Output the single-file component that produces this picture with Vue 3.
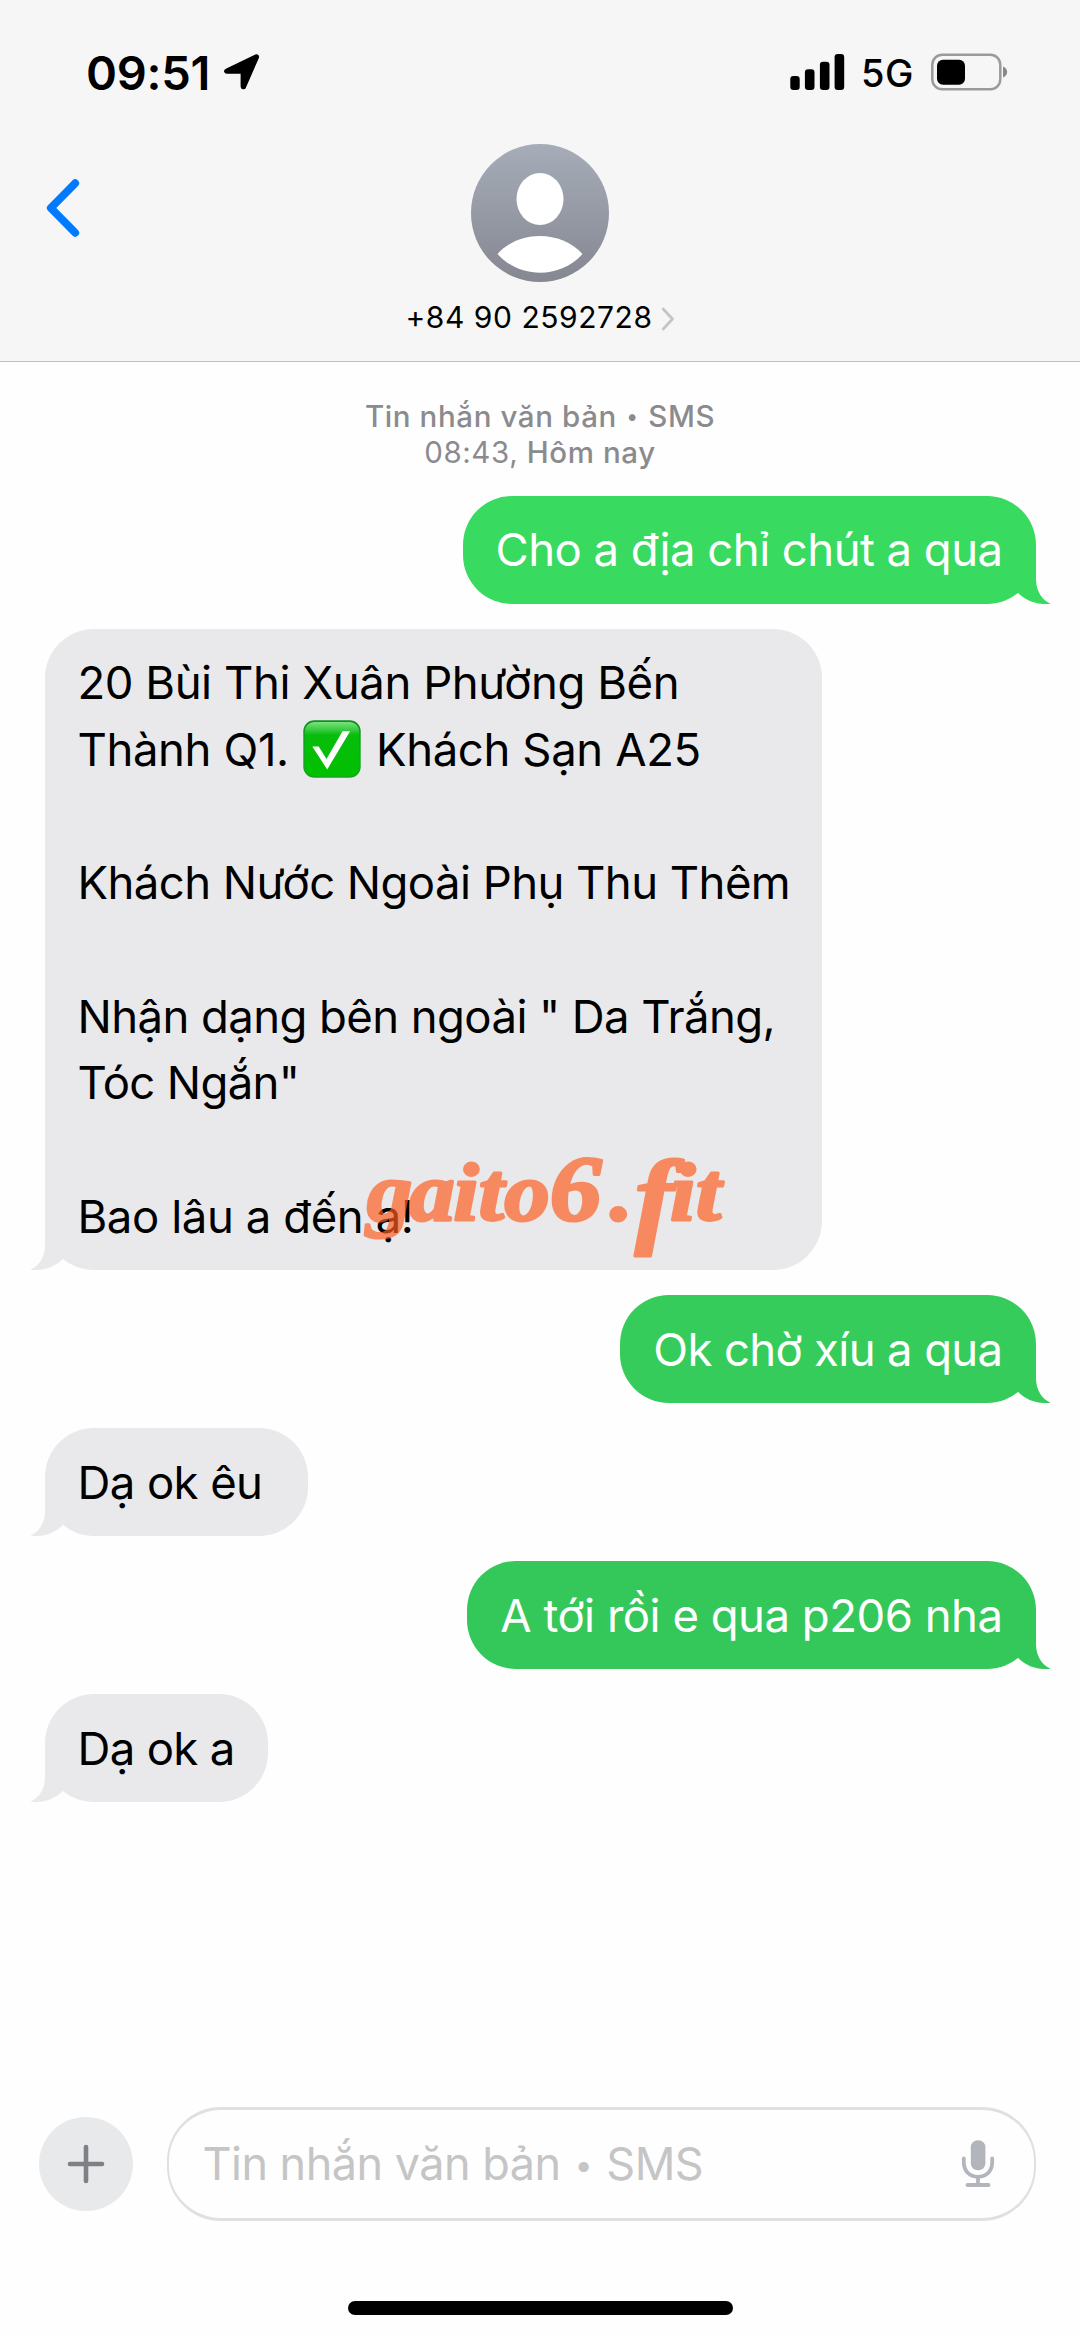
<script setup>
const contact = '+84 90 2592728'

// `track` is the letter spacing of a line in px
const messages = [
  { id: 1, side: 'out', tone: 'fresh', lines: [{ text: 'Cho a địa chỉ chút a qua', track: -0.55 }] },
  {
    id: 2,
    side: 'in',
    tone: 'wide',
    lines: [
      { text: '20 Bùi Thi Xuân Phường Bến', track: -0.46 },
      { text: 'Thành Q1. ', check: true, after: ' Khách Sạn A25', track: -0.4 },
      { text: '', track: 0 },
      { text: 'Khách Nước Ngoài Phụ Thu Thêm', track: -0.57 },
      { text: '', track: 0 },
      { text: 'Nhận dạng bên ngoài " Da Trắng,', track: -0.59 },
      { text: 'Tóc Ngắn"', track: -0.65 },
      { text: '', track: 0 },
      { text: 'Bao lâu a đến ạ!', track: -0.42 }
    ]
  },
  { id: 3, side: 'out', tone: 'mid', lines: [{ text: 'Ok chờ xíu a qua', track: -0.65 }] },
  { id: 4, side: 'in', tone: '', lines: [{ text: 'Dạ ok êu\u00a0', track: -0.6 }] },
  { id: 5, side: 'out', tone: 'deep', lines: [{ text: 'A tới rồi e qua p206 nha', track: -0.5 }] },
  { id: 6, side: 'in', tone: '', lines: [{ text: 'Dạ ok a', track: -0.65 }] }
]
</script>

<template>
  <div class="phone">
    <header class="header">
      <div class="status">
        <div class="status-left">
          <span class="clock">09:51</span>
          <svg class="location" width="38" height="38" viewBox="0 0 38 38">
            <path d="M3.500 17.200 33 2.800c1-.4 1.900.4 1.500 1.500L21.600 34c-.6 1.300-2.500 1-2.500-.5V19.300H4c-1.700 0-2-1.500-.5-2.100Z" fill="#000" stroke="#000" stroke-width="3" stroke-linejoin="round" />
          </svg>
        </div>
        <div class="status-right">
          <svg width="55" height="37" viewBox="0 0 55 37">
            <rect x="0.300" y="22" width="9.400" height="14" rx="3.200" />
            <rect x="14.900" y="15.300" width="9.600" height="20.700" rx="3.200" />
            <rect x="29.900" y="7.800" width="9.600" height="28.200" rx="3.200" />
            <rect x="44.600" y="0" width="9.600" height="36" rx="3.200" />
          </svg>
          <span class="network">5G</span>
          <svg class="battery" width="77" height="38" viewBox="0 0 77 38">
            <rect x="1.300" y="1.800" width="68" height="34.400" rx="10" fill="none" stroke="#9b9b9c" stroke-width="2.500" />
            <rect x="6" y="6.700" width="28" height="25" rx="6" />
            <path d="M72 13.500c5.500 2 5.500 9 0 11Z" fill="#88888a" />
          </svg>
        </div>
      </div>

      <div class="identity">
        <svg class="back" width="36" height="60" viewBox="0 0 36 60">
          <path d="M30.200 5.200 5.800 30l24.400 24.800" fill="none" stroke="#007aff" stroke-width="7.800" stroke-linecap="round" stroke-linejoin="round" />
        </svg>
        <svg class="avatar" width="138" height="138" viewBox="0 0 138 138">
          <defs>
            <linearGradient id="avatar-fill" x1="0" y1="0" x2="0" y2="1">
              <stop offset="0" stop-color="#a6adb8" />
              <stop offset="1" stop-color="#858791" />
            </linearGradient>
          </defs>
          <circle cx="69" cy="69" r="69" fill="url(#avatar-fill)" />
          <ellipse cx="69" cy="55" rx="23.500" ry="26" fill="#fff" />
          <path d="M26.500 110C48 86 90 86 111.500 110C89 135 49 135 26.500 110Z" fill="#fff" />
        </svg>
      </div>

      <div class="contact">
        <span>{{ contact }}</span>
        <svg width="14" height="24" viewBox="0 0 14 24">
          <path d="M2.200 2 11.500 12 2.200 22" fill="none" stroke="#c5c5c8" stroke-width="2.800" stroke-linecap="round" stroke-linejoin="round" />
        </svg>
      </div>
    </header>

    <main class="thread">
      <div class="stamp">
        <div>Tin nhắn văn bản <span class="dot">•</span> SMS</div>
        <div><span class="stamp-time">08:43,</span> Hôm nay</div>
      </div>

      <div v-for="m in messages" :key="m.id" class="bubble" :class="[m.side, m.tone]">
        <div v-for="(line, i) in m.lines" :key="i" class="line" :style="{ letterSpacing: line.track + 'px' }">
          <span>{{ line.text }}</span>
          <svg v-if="line.check" class="check" width="58" height="58" viewBox="0 0 58 58">
            <defs>
              <linearGradient id="check-rim" x1="0" y1="0" x2="0" y2="1">
                <stop offset="0" stop-color="#0d8f1d" />
                <stop offset="0.500" stop-color="#10a820" />
                <stop offset="1" stop-color="#15a51d" />
              </linearGradient>
              <linearGradient id="check-face" x1="0" y1="0" x2="0" y2="1">
                <stop offset="0" stop-color="#7be07f" />
                <stop offset="0.160" stop-color="#2fc936" />
                <stop offset="0.240" stop-color="#08bd0c" />
                <stop offset="1" stop-color="#00c000" />
              </linearGradient>
            </defs>
            <rect x="0.300" y="0.300" width="57.400" height="57.400" rx="11" fill="url(#check-rim)" />
            <rect x="1.800" y="2" width="54.400" height="54.200" rx="9.500" fill="url(#check-face)" />
            <path d="M9.300 26.400h6.400L23.500 39 39.500 11.200h7.600L24.200 49.500Z" fill="#fff" />
          </svg>
          <span v-if="line.after">{{ line.after }}</span>
        </div>

        <svg class="tail" width="50" height="50" viewBox="0 0 50 50">
          <path d="M35 0V25C35 37 41 46 49.500 49.700C47 50 44.500 50 43 50C34 50 24 46 17.200 39L5 20Z" fill="currentColor" />
        </svg>

        <svg v-if="m.tone === 'wide'" class="watermark" width="400" height="180" viewBox="360 1120 400 180">
          <text transform="translate(366 1220) scale(1.100 1)" y="0" font-size="82">
            <tspan x="1">g</tspan><tspan x="39.500">a</tspan><tspan x="79.500">i</tspan><tspan x="102.500">t</tspan><tspan x="126">o</tspan><tspan x="167" font-size="94">6</tspan><tspan x="222">.</tspan><tspan x="244.500" y="13" font-size="106">f</tspan><tspan x="276.500" y="0">i</tspan><tspan x="300">t</tspan>
          </text>
        </svg>
      </div>
    </main>

    <footer class="composer">
      <div class="plus">
        <svg width="38" height="40" viewBox="0 0 38 40">
          <path d="M19 3v34M3 20h32" fill="none" stroke="#7e8085" stroke-width="4.600" stroke-linecap="round" />
        </svg>
      </div>
      <div class="field">
        <span class="placeholder">Tin nhắn văn bản <span class="dot">•</span> SMS</span>
        <svg width="34" height="48" viewBox="0 0 34 48" fill="#b3b5bd">
          <rect x="9.800" y="0.300" width="14.600" height="30" rx="7" />
          <path d="M2.800 18.500V22C2.800 31 8.500 36.800 17 36.800S31.200 31 31.200 22V18.500M17 37v8M6.500 45H27.500" fill="none" stroke="#b3b5bd" stroke-width="3.800" stroke-linecap="round" />
        </svg>
      </div>
    </footer>
    <div class="home"></div>
  </div>
</template>

<style>
body {
  background: #fefefe;
}
</style>

<style scoped>
.phone {
  display: flex;
  flex-direction: column;
  width: 1080px;
  height: 2337px;
  overflow: hidden;
  background: #fefefe;
  color: #000;
  font-family: Inter, "Noto Sans", sans-serif;
}
svg {
  display: block;
  flex: none;
}
.header {
  box-sizing: border-box;
  height: 362px;
  background: #f6f6f7;
  border-bottom: 1.500px solid #bebebf;
}
.status {
  display: flex;
  align-items: center;
  justify-content: space-between;
  height: 144px;
  padding: 0 72px 0 86px;
}
.status-left,
.status-right {
  display: flex;
  align-items: center;
}
.clock {
  font-size: 47px;
  font-weight: 600;
  line-height: 1;
  letter-spacing: -0.300px;
}
.location {
  margin-left: 13px;
}
.network {
  margin: 2px 17px 0 16px;
  font-size: 38px;
  font-weight: 500;
  line-height: 1;
  letter-spacing: 0.500px;
}
.identity {
  display: grid;
  grid-template-columns: 1fr auto 1fr;
}
.back {
  margin: 34px 0 0 45px;
}
.contact {
  display: flex;
  align-items: center;
  justify-content: center;
  gap: 8px;
  margin-top: 17px;
  font-size: 30px;
  line-height: 36px;
  letter-spacing: 0.550px;
}
.contact svg {
  margin-top: 3px;
}
.thread {
  flex: 1;
  display: flex;
  flex-direction: column;
  gap: 25.200px;
  padding: 35.500px 44.500px 0;
}
.stamp {
  font-size: 29.500px;
  font-weight: 500;
  line-height: 36.500px;
  letter-spacing: 0.600px;
  text-align: center;
  color: #8b8b8e;
}
.stamp-time {
  font-weight: 400;
}
.dot {
  display: inline-block;
  margin: 0 0.060em;
  font-size: 0.720em;
  line-height: 1;
  vertical-align: 0.110em;
}
.bubble {
  position: relative;
  box-sizing: border-box;
  padding: 21.700px 33px 19.500px;
  border-radius: 49px;
  font-size: 45.500px;
}
.line {
  display: flex;
  height: 66.650px;
  line-height: 66.650px;
  white-space: pre;
}
.in {
  align-self: flex-start;
  color: #000;
  background: #e9e9eb;
}
.out {
  align-self: flex-end;
  color: #fff;
  background: var(--green);
}
.fresh {
  --green: #38da60;
}
.mid {
  --green: #36cc5b;
}
.deep {
  --green: #34c85a;
}
.wide {
  width: 777.500px;
}
.check {
  margin: 2.500px 2.500px 0 2px;
}
.tail {
  position: absolute;
  right: -15px;
  bottom: 0;
  color: var(--green);
}
.in .tail {
  right: auto;
  left: -15px;
  color: #e9e9eb;
  transform: scaleX(-1);
}
.watermark {
  position: absolute;
  left: 315.500px;
  top: 491px;
  overflow: visible;
  opacity: 0.680;
  fill: #ff5d1f;
  stroke: #ff5d1f;
  stroke-width: 3px;
  stroke-linejoin: round;
  font-family: "Liberation Serif", serif;
  font-style: italic;
  font-weight: 700;
}
.composer {
  display: flex;
  align-items: center;
  gap: 33.500px;
  height: 114px;
  padding: 0 44px 0 39px;
}
.plus {
  display: flex;
  align-items: center;
  justify-content: center;
  width: 94px;
  height: 94px;
  border-radius: 50%;
  background: #e8e9eb;
}
.field {
  box-sizing: border-box;
  flex: 1;
  display: flex;
  align-items: center;
  justify-content: space-between;
  height: 114px;
  padding: 0 39.500px 0 34px;
  border: 3px solid #e0e0e1;
  border-left-width: 2px;
  border-right-width: 2px;
  border-radius: 54px;
}
.placeholder {
  font-size: 45px;
  line-height: 66px;
  letter-spacing: -0.520px;
  color: #c5c5c6;
}
.home {
  width: 385px;
  height: 14px;
  margin: 80px auto 22px;
  border-radius: 7px;
  background: #000;
}
</style>
